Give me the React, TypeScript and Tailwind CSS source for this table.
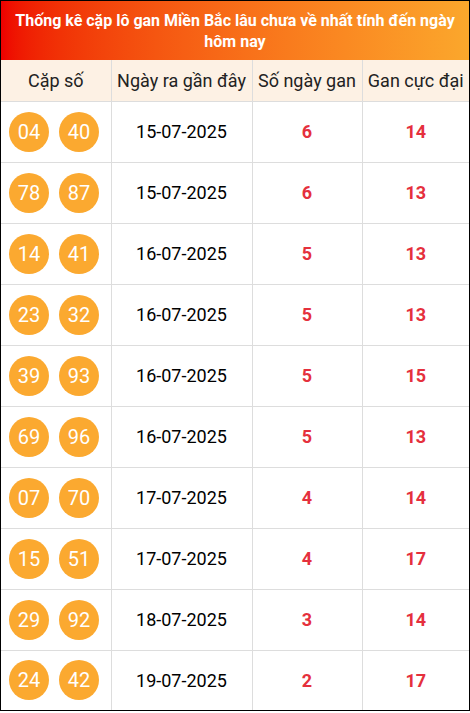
const rows = [
  { a: "04", b: "40", date: "15-07-2025", gan: 6, max: 14 },
  { a: "78", b: "87", date: "15-07-2025", gan: 6, max: 13 },
  { a: "14", b: "41", date: "16-07-2025", gan: 5, max: 13 },
  { a: "23", b: "32", date: "16-07-2025", gan: 5, max: 13 },
  { a: "39", b: "93", date: "16-07-2025", gan: 5, max: 15 },
  { a: "69", b: "96", date: "16-07-2025", gan: 5, max: 13 },
  { a: "07", b: "70", date: "17-07-2025", gan: 4, max: 14 },
  { a: "15", b: "51", date: "17-07-2025", gan: 4, max: 17 },
  { a: "29", b: "92", date: "18-07-2025", gan: 3, max: 14 },
  { a: "24", b: "42", date: "19-07-2025", gan: 2, max: 17 },
];

function Ball({ n }: { n: string }) {
  return (
    <span className="flex h-10 w-10 items-center justify-center rounded-full bg-[#fba930] text-[20px] text-white">
      {n}
    </span>
  );
}

export default function App() {
  return (
    <div className="w-[470px] border border-black bg-white font-['Roboto',sans-serif]">
      {/* Title */}
      <div className="flex h-[59px] items-center justify-center bg-gradient-to-r from-[#ee0000] to-[#fba72c] px-3 text-center text-[16px] font-bold leading-[21px] text-white">
        Thống kê cặp lô gan Miền Bắc lâu chưa về nhất tính đến ngày hôm nay
      </div>

      <table className="w-full table-fixed border-collapse">
        <colgroup>
          <col className="w-[110px]" />
          <col className="w-[141px]" />
          <col className="w-[110px]" />
          <col />
        </colgroup>
        <thead>
          <tr className="h-[41px] bg-[#fdf1e4] text-[18px] text-[#222]">
            <th className="border-r border-b border-[#dddddd] font-normal">Cặp số</th>
            <th className="border-r border-b border-[#dddddd] font-normal">Ngày ra gần đây</th>
            <th className="border-r border-b border-[#dddddd] font-normal">Số ngày gan</th>
            <th className="border-b border-[#dddddd] font-normal">Gan cực đại</th>
          </tr>
        </thead>
        <tbody>
          {rows.map((r, i) => (
            <tr key={i} className={i < rows.length - 1 ? "h-[61px] border-b border-[#dddddd]" : "h-[60px]"}>
              <td className="border-r border-[#dddddd] pl-2">
                <div className="flex gap-[10px]">
                  <Ball n={r.a} />
                  <Ball n={r.b} />
                </div>
              </td>
              <td className="border-r border-[#dddddd] text-center text-[18px] text-black">{r.date}</td>
              <td className="border-r border-[#dddddd] text-center text-[18px] font-bold text-[#e5303d]">{r.gan}</td>
              <td className="text-center text-[18px] font-bold text-[#e5303d]">{r.max}</td>
            </tr>
          ))}
        </tbody>
      </table>
    </div>
  );
}
